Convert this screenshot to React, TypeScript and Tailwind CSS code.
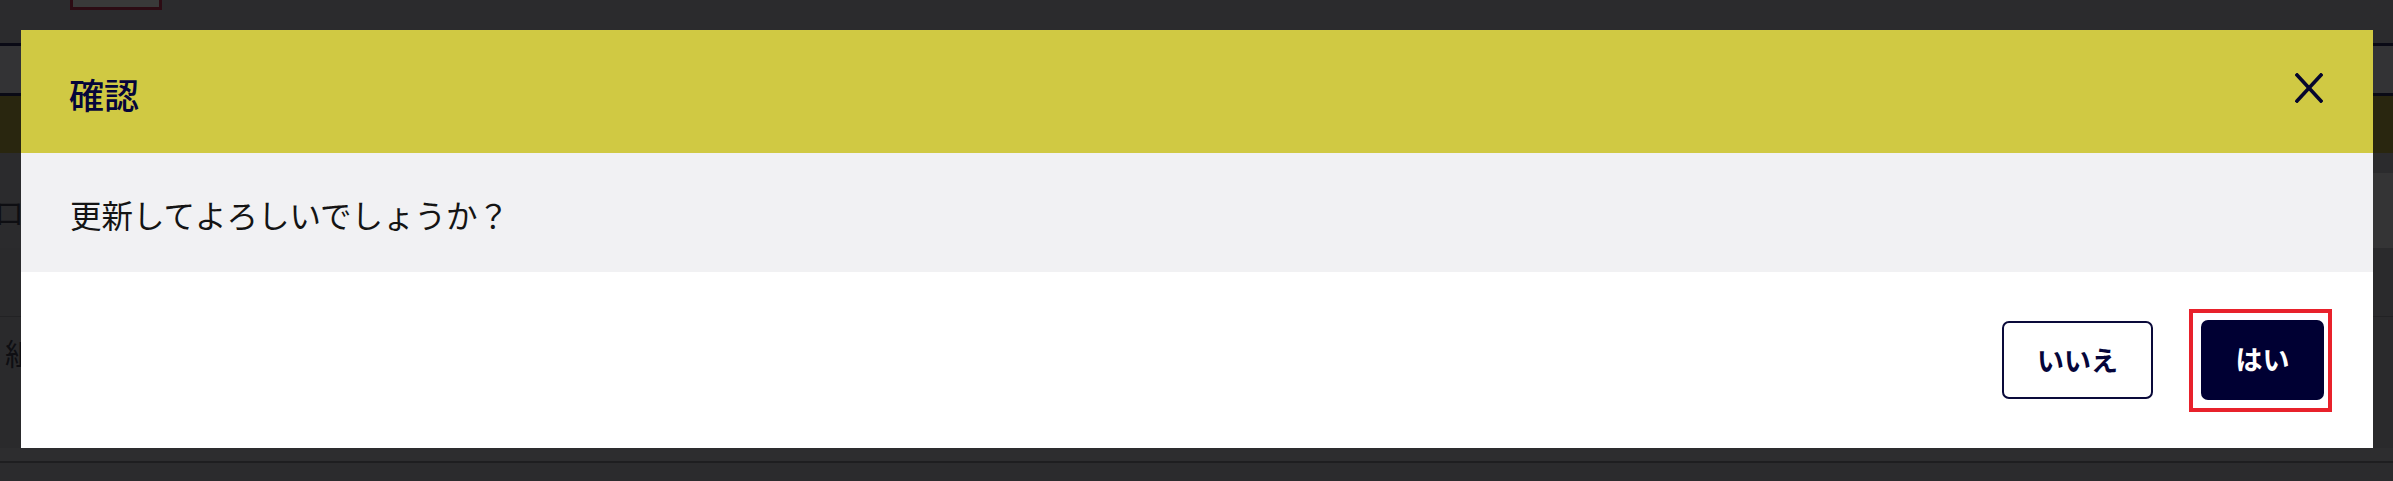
import React from "react";

export default function App() {
  const jp = { fontFamily: '"Noto Sans CJK JP", "Noto Sans", sans-serif' };
  return (
    <div className="relative w-[2393px] h-[481px] overflow-hidden bg-[#2b2b2d]" style={jp}>
      {/* dimmed page behind the modal */}
      <div className="flex flex-col">
        <div className="h-[43px] flex items-start">
          <div className="ml-[70px] w-[92px] h-[10px] border-[3px] border-t-0 border-[#2c0b13] bg-[#393939]" />
        </div>
        <div className="h-[3px] bg-[#0a0a15]" />
        <div className="h-[47px] bg-[#333335]" />
        <div className="h-[3px] bg-[#0a0a15]" />
        <div className="h-[57px] bg-[#29260f]" />
        <div className="h-[20px] bg-[#2b2b2d]" />
        <div className="h-[75px] flex items-center bg-[#2b2b2d]">
          <span className="ml-[-6px] text-[30px] leading-none text-[#0e0e12]">ロス</span>
          <div className="ml-auto w-[400px] h-full bg-[#343435]" />
        </div>
        <div className="h-[68px] bg-[#2a2a2c]" />
        <div className="h-[1px] bg-[#222224]" />
        <div className="h-[131px] flex items-start pt-[20px] bg-[#2a2a2c]">
          <span className="ml-[5px] text-[30px] leading-none text-[#0e0e12]">組</span>
        </div>
        <div className="h-[13px] bg-[#2d2d2f]" />
        <div className="h-[2px] bg-[#1e1e20]" />
        <div className="flex-1 bg-[#2b2b2d]" />
      </div>

      {/* modal */}
      <div className="absolute left-[21px] top-[30px] w-[2352px] h-[418px] flex flex-col bg-white">
        <div className="h-[123px] flex items-center justify-between pl-[48px] pr-[50px] bg-[#d0c943]">
          <span className="text-[35px] leading-none font-medium text-[#05053a] mt-[4px]">確認</span>
          <svg width="28" height="30" viewBox="0 0 28 30" className="mb-[8px]">
            <line x1="2" y1="2" x2="26" y2="28" stroke="#06062e" strokeWidth="3.6" strokeLinecap="square" />
            <line x1="26" y1="2" x2="2" y2="28" stroke="#06062e" strokeWidth="3.6" strokeLinecap="square" />
          </svg>
        </div>
        <div className="h-[119px] flex items-center pl-[49px] bg-[#f1f1f3]">
          <span className="text-[31.5px] leading-none text-[#141414] mt-[4px]">更新してよろしいでしょうか？</span>
        </div>
        <div className="flex-1 flex items-center justify-end pr-[41px] gap-[36px]">
          <button className="w-[151px] h-[78px] rounded-[7px] border-2 border-[#0a0a3a] bg-white text-[27px] font-bold text-[#05053a] flex items-center justify-center">
            いいえ
          </button>
          <div className="border-4 border-[#e8212b] pl-[8px] pt-[7px] pr-[4px] pb-[8px]">
            <button className="w-[123px] h-[80px] rounded-[7px] bg-[#000033] text-[27px] font-bold text-white flex items-center justify-center">
              はい
            </button>
          </div>
        </div>
      </div>
    </div>
  );
}
